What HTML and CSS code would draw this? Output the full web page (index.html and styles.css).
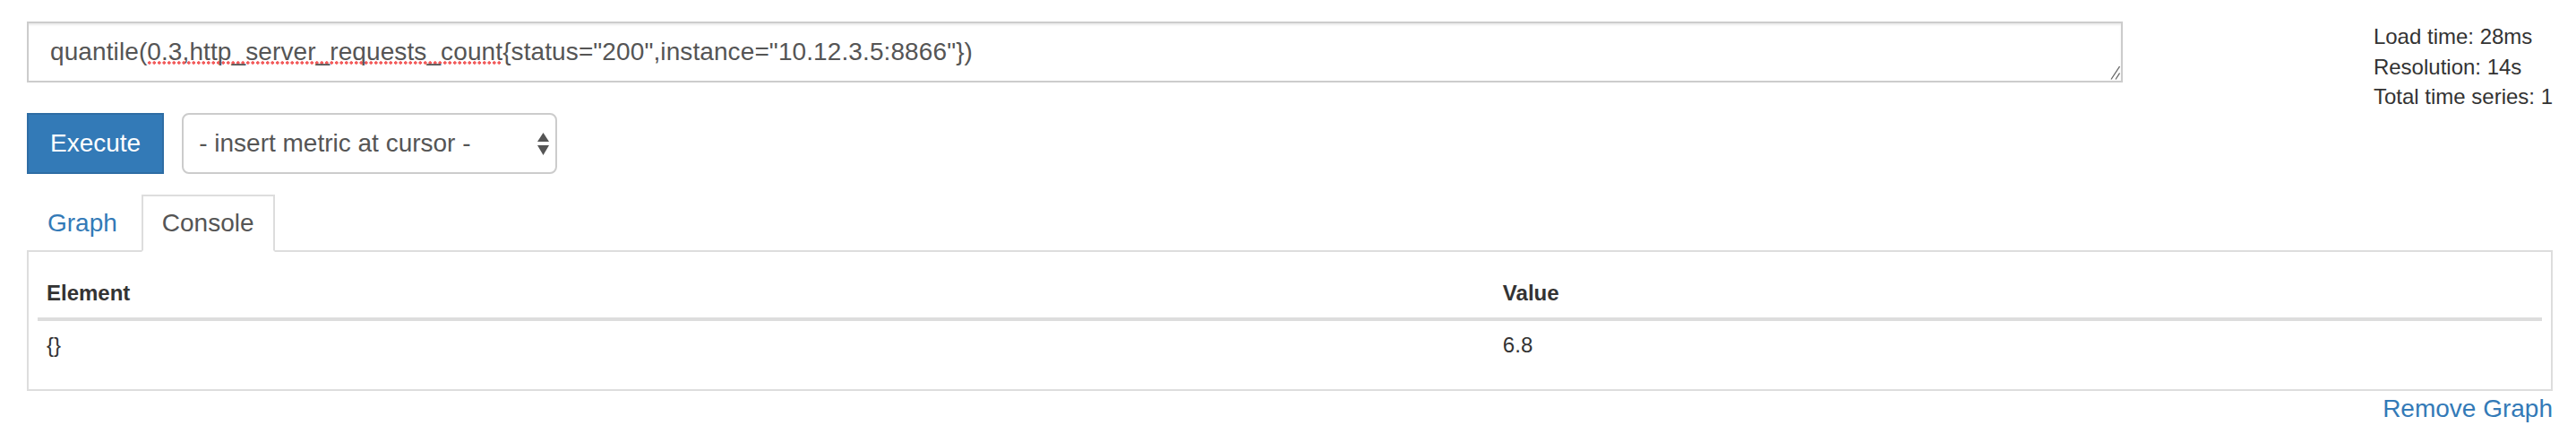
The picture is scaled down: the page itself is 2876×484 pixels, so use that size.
FILE: index.html
```html
<!DOCTYPE html>
<html lang="en">
<head>
<meta charset="utf-8">
<title>Prometheus Graph</title>
<link rel="stylesheet" href="styles.css">
</head>
<body>
<div class="page">
  <div class="query-row">
    <div class="query-col">
      <div class="expr-input" role="textbox">quantile(<span class="misspelled">0.3,http_server_requests_count</span>{status="200",instance="10.12.3.5:8866"})<svg class="grip" viewBox="0 0 12 16" width="12" height="16"><path d="M11.5 1 L2 15.5 M11.5 8.5 L7 15.5" stroke="#666" stroke-width="1.3" fill="none"/></svg></div>
    </div>
    <div class="eval-stats">
      <div>Load time: 28ms</div>
      <div>Resolution: 14s</div>
      <div>Total time series: 1</div>
    </div>
  </div>

  <div class="controls">
    <button class="btn-execute" type="button">Execute</button>
    <div class="metric-select">- insert metric at cursor -<svg class="select-arrows" viewBox="0 0 13 25" width="13" height="25"><path d="M0 10 L13 10 L6.5 0 Z M0 14 L13 14 L6.5 25 Z" fill="#555"/></svg></div>
  </div>

  <div class="tabs">
    <ul class="nav-tabs">
      <li class="nav-item"><a class="tab">Graph</a></li>
      <li class="nav-item"><a class="tab active">Console</a></li>
    </ul>
    <div class="tab-content">
      <table class="console-table">
        <thead>
          <tr><th class="col-element">Element</th><th>Value</th></tr>
        </thead>
        <tbody>
          <tr><td>{}</td><td>6.8</td></tr>
        </tbody>
      </table>
    </div>
  </div>

  <div class="remove-row"><a class="remove-link">Remove Graph</a></div>
</div>
</body>
</html>
```

FILE: styles.css
```css
* { box-sizing: border-box; }

html, body {
  margin: 0;
  background: #fff;
}

body {
  font-family: "Liberation Sans", Arial, Helvetica, sans-serif;
  font-size: 28px;
  line-height: 40px;
  color: #333;
}

.page {
  padding: 24px 26px 0 30px;
}

/* first row: expression input + stats */
.query-row {
  display: grid;
  grid-template-columns: calc((100% + 60px) * 10 / 12 - 60px) 1fr;
  column-gap: 60px;
  align-items: start;
}

.expr-input {
  position: relative;
  height: 68px;
  padding: 12px 24px;
  border: 2px solid #ccc;
  background: #fff;
  box-shadow: inset 0 2px 2px rgba(0, 0, 0, 0.075);
  color: #555;
  letter-spacing: 0.1px;
  white-space: nowrap;
  overflow: hidden;
}

.misspelled {
  background-image: radial-gradient(circle at center, #f25a5a 0, #f25a5a 1.5px, rgba(242, 90, 90, 0) 2px);
  background-size: 5.5px 4px;
  background-repeat: repeat-x;
  background-position: 0 calc(100% - 1px);
}

.grip {
  position: absolute;
  right: 1px;
  bottom: 1px;
  display: block;
}

.eval-stats {
  justify-self: end;
  font-size: 24px;
  line-height: 33.5px;
  color: #333;
}

/* second row: execute + select */
.controls {
  display: flex;
  align-items: center;
  gap: 20px;
  margin-top: 1.5px;
}

.btn-execute {
  height: 68px;
  padding: 0 24px;
  border: 2px solid #2e6da4;
  border-radius: 0;
  background: #337ab7;
  color: #fff;
  font-family: inherit;
  font-size: 28px;
  line-height: 40px;
}

.metric-select {
  position: relative;
  width: 419px;
  height: 68px;
  padding: 12px 17px;
  border: 2px solid #ccc;
  border-radius: 8px;
  background: #fff;
  color: #555;
  white-space: nowrap;
}

.select-arrows {
  position: absolute;
  right: 7px;
  top: 20px;
  display: block;
}

/* tabs */
.tabs {
  margin-top: 23px;
}

.nav-tabs {
  display: flex;
  list-style: none;
  margin: 0;
  padding: 0;
  border-bottom: 2px solid #ddd;
}

.nav-item {
  margin-right: 4px;
  margin-bottom: -2px;
}

.tab {
  display: block;
  padding: 10px 21px;
  border: 2px solid transparent;
  line-height: 40px;
  color: #337ab7;
  text-decoration: none;
}

.tab.active {
  color: #555;
  background: #fff;
  border-color: #ddd;
  border-bottom-color: transparent;
}

.tab-content {
  border: 2px solid #ddd;
  border-top: 0;
  padding: 19px 10px 21px;
}

.console-table {
  width: 100%;
  border-collapse: collapse;
  font-size: 24px;
  line-height: 34.3px;
  color: #333;
}

.console-table th,
.console-table td {
  padding: 10px;
  text-align: left;
}

.console-table th {
  font-weight: bold;
  vertical-align: bottom;
  border-bottom: 4px solid #ddd;
}

.col-element {
  width: 58.15%;
}

.remove-row {
  text-align: right;
  line-height: 40px;
}

.remove-link {
  color: #337ab7;
  text-decoration: none;
}
```
